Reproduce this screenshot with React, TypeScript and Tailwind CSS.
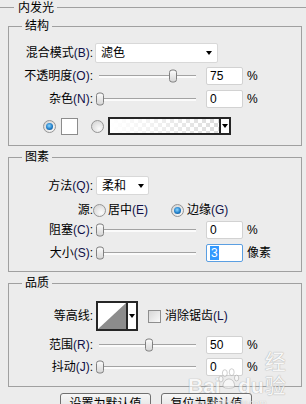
import React from "react";

function Arrow() {
  return (
    <div className="w-0 h-0 border-l-[3px] border-r-[3px] border-t-[4px] border-l-transparent border-r-transparent border-t-black" />
  );
}

function Label({ zh, en, className = "w-[84px]" }: { zh: string; en?: string; className?: string }) {
  return (
    <div className={`shrink-0 text-right whitespace-nowrap ${className}`}>
      <span>{zh}</span>
      {en && <span className="text-[#101048]">{en}</span>}
      <span>:</span>
    </div>
  );
}

function Radio({ checked, className = "" }: { checked?: boolean; className?: string }) {
  return (
    <div
      className={`w-[13px] h-[13px] shrink-0 rounded-full border border-[#959595] bg-[radial-gradient(circle_at_65%_70%,#fbfbfb,#cfcfcf)] flex items-center justify-center ${className}`}
    >
      {checked && (
        <div className="w-[7px] h-[7px] rounded-full bg-[radial-gradient(circle_at_45%_40%,#8fd8ff,#1f7dc8_55%,#0a3e70)]" />
      )}
    </div>
  );
}

function Slider({ pct }: { pct: number }) {
  return (
    <div className="relative w-[103px] h-full flex items-center shrink-0">
      <div className="mx-[3px] flex-1 h-[3px] border-t border-[#a3a3a3] bg-[#fbfbfb]" />
      <div
        className="absolute top-1/2 -translate-y-1/2 w-[8px] h-[13px] rounded-[3px] border border-[#808080] bg-gradient-to-b from-[#fbfbfb] to-[#d7d7d7]"
        style={{ left: `${pct * 98 - 0.5}px` }}
      />
    </div>
  );
}

function NumInput({ children, focused }: { children: React.ReactNode; focused?: boolean }) {
  return (
    <div
      className={`ml-[7px] w-[37px] h-[18px] shrink-0 bg-white border rounded-[2px] flex items-center pl-[3px] ${
        focused ? "border-[#5b9fe2]" : "border-[#d2d2d2]"
      }`}
    >
      {children}
    </div>
  );
}

function Fieldset({ title, className, children }: { title: string; className: string; children: React.ReactNode }) {
  return (
    <fieldset className={`ml-[8px] w-[294px] border border-[#a0a0a0] ${className}`}>
      <legend className="ml-[13px] px-[3px] leading-[16px]">{title}</legend>
      {children}
    </fieldset>
  );
}

export default function App() {
  return (
    <div className="relative w-[306px] h-[404px] overflow-hidden bg-[#ececec] text-[12px] leading-[14px] text-black font-['Liberation_Sans','Noto_Sans_CJK_SC',sans-serif]">
      <div className="h-[15px] flex items-center">
        <div className="w-[14px] h-px bg-[#a0a0a0]" />
        <span className="ml-[4px] mr-[3px]">内发光</span>
        <div className="flex-1 h-px bg-[#a0a0a0]" />
      </div>

      {/* 结构 */}
      <Fieldset title="结构" className="mt-[3px] pb-[10px]">
        <div className="mt-[9px] h-[20px] flex items-center">
          <Label zh="混合模式" en="(B)" />
          <div className="ml-[2px] w-[123px] h-[20px] bg-white border border-[#d8d8d8] rounded-[2px] flex items-center justify-between pl-[5px] pr-[5px]">
            <span>滤色</span>
            <Arrow />
          </div>
        </div>
        <div className="mt-[4px] h-[18px] flex items-center">
          <Label zh="不透明度" en="(O)" />
          <div className="ml-[3px] h-full flex items-center">
            <Slider pct={0.75} />
          </div>
          <NumInput>75</NumInput>
          <span className="ml-[4px]">%</span>
        </div>
        <div className="mt-[5px] h-[18px] flex items-center">
          <Label zh="杂色" en="(N)" />
          <div className="ml-[3px] h-full flex items-center">
            <Slider pct={0} />
          </div>
          <NumInput>0</NumInput>
          <span className="ml-[4px]">%</span>
        </div>
        <div className="mt-[9px] h-[18px] flex items-center">
          <Radio checked className="ml-[34px]" />
          <div className="ml-[5px] w-[17px] h-[17px] border border-[#8c8c8c] bg-white" />
          <Radio className="ml-[13px]" />
          <div className="ml-[4px] w-[123px] h-[18px] border-2 border-[#262626] flex">
            <div className="flex-1 [background:linear-gradient(to_right,#ffffff,rgba(255,255,255,0)),conic-gradient(#dcdcdc_25%,#ffffff_0_50%,#dcdcdc_0_75%,#ffffff_0)_0_0/8px_8px]" />
            <div className="w-[10px] border-l-2 border-[#262626] bg-white flex items-center justify-center">
              <Arrow />
            </div>
          </div>
        </div>
      </Fieldset>

      {/* 图素 */}
      <Fieldset title="图素" className="mt-[3px] pb-[9px]">
        <div className="mt-[11px] h-[19px] flex items-center">
          <Label zh="方法" en="(Q)" />
          <div className="ml-[3px] w-[53px] h-[19px] bg-white border border-[#d8d8d8] rounded-[2px] flex items-center justify-between pl-[5px] pr-[4px]">
            <span>柔和</span>
            <Arrow />
          </div>
        </div>
        <div className="mt-[8px] h-[14px] flex items-center">
          <Label zh="源" />
          <Radio />
          <span className="ml-[2px] w-[63px] whitespace-nowrap">
            居中<span className="text-[#101048]">(E)</span>
          </span>
          <Radio checked />
          <span className="ml-[3px] whitespace-nowrap">
            边缘<span className="text-[#101048]">(G)</span>
          </span>
        </div>
        <div className="mt-[4px] h-[18px] flex items-center">
          <Label zh="阻塞" en="(C)" />
          <div className="ml-[3px] h-full flex items-center">
            <Slider pct={0} />
          </div>
          <NumInput>0</NumInput>
          <span className="ml-[4px]">%</span>
        </div>
        <div className="mt-[5px] h-[18px] flex items-center">
          <Label zh="大小" en="(S)" />
          <div className="ml-[3px] h-full flex items-center">
            <Slider pct={0} />
          </div>
          <NumInput focused>
            <span className="h-[14px] leading-[14px] px-[1px] bg-[#3399ff] text-white">3</span>
          </NumInput>
          <span className="ml-[4px]">像素</span>
        </div>
      </Fieldset>

      {/* 品质 */}
      <Fieldset title="品质" className="mt-[3px] pb-[10px]">
        <div className="mt-[10px] h-[30px] flex items-center">
          <Label zh="等高线" />
          <div className="ml-[3px] w-[42px] h-[30px] border-2 border-[#262626] bg-white flex">
            <svg width="28" height="26" viewBox="0 0 28 26" className="block">
              <polygon points="0,26 28,0 28,26" fill="#8c8c8c" />
            </svg>
            <div className="flex-1 border-l-2 border-[#262626] bg-white flex items-center justify-center">
              <Arrow />
            </div>
          </div>
          <div className="ml-[10px] w-[13px] h-[13px] border border-[#8e8e8e] bg-gradient-to-br from-[#d6d6d6] to-[#fafafa]" />
          <span className="ml-[4px] whitespace-nowrap">
            消除锯齿<span className="text-[#101048]">(L)</span>
          </span>
        </div>
        <div className="mt-[5px] h-[18px] flex items-center">
          <Label zh="范围" en="(R)" />
          <div className="ml-[3px] h-full flex items-center">
            <Slider pct={0.5} />
          </div>
          <NumInput>50</NumInput>
          <span className="ml-[4px]">%</span>
        </div>
        <div className="mt-[4px] h-[18px] flex items-center">
          <Label zh="抖动" en="(J)" />
          <div className="ml-[3px] h-full flex items-center">
            <Slider pct={0} />
          </div>
          <NumInput>0</NumInput>
          <span className="ml-[4px]">%</span>
        </div>
      </Fieldset>

      <div className="mt-[6px] ml-[60px] flex gap-[10px]">
        <button className="w-[91px] h-[23px] shrink-0 border border-[#707070] rounded-[3px] bg-gradient-to-b from-[#f7f7f7] to-[#dadada] leading-[21px] text-center">
          设置为默认值
        </button>
        <button className="w-[91px] h-[23px] shrink-0 border border-[#707070] rounded-[3px] bg-gradient-to-b from-[#f7f7f7] to-[#dadada] leading-[21px] text-center">
          复位为默认值
        </button>
      </div>

      {/* watermark */}
      <div className="absolute left-[188px] top-[350px] pointer-events-none opacity-60">
        <div className="flex items-end text-[21px] leading-[24px] font-bold text-white [text-shadow:0_0_1px_#8a8a8a,0_0_1px_#8a8a8a]">
          <span>Bai</span>
          <svg width="26" height="22" viewBox="0 0 26 22" className="mb-[8px] -mx-[4px]">
            <g fill="#ffffff" stroke="#9a9a9a" strokeWidth="0.8">
              <ellipse cx="8" cy="5" rx="2.5" ry="3.5" />
              <ellipse cx="15" cy="4" rx="2.5" ry="3.5" />
              <ellipse cx="4" cy="11" rx="2.2" ry="3" />
              <ellipse cx="20" cy="10" rx="2.2" ry="3" />
              <path d="M6 19 C6 13 10 11 12 11 C15 11 18 13 18 19 C16 21 8 21 6 19 Z" />
            </g>
          </svg>
          <span>du</span>
          <span className="ml-[1px] font-normal">经验</span>
        </div>
        <div className="text-[9px] leading-[10px] text-white [text-shadow:0_0_1px_#8a8a8a] ml-[6px]">jingyan.baidu.com</div>
      </div>
    </div>
  );
}
